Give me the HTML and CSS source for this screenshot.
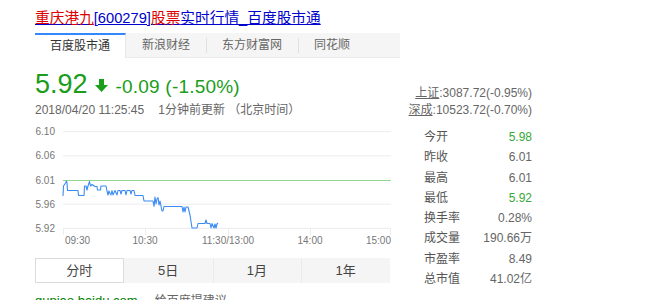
FILE: index.html
```html
<!DOCTYPE html>
<html lang="zh-CN">
<head>
<meta charset="utf-8">
<title>重庆港九股票</title>
<link rel="stylesheet" href="styles.css">
</head>
<body>
<div class="card">
  <div class="title"><a href="#"><em>重庆港九</em>[600279]<em>股票</em>实时行情_百度股市通</a></div>
  <div class="body">
    <div class="left">
      <div class="srcbar">
        <span class="src active">百度股市通</span>
        <span class="src">新浪财经</span>
        <span class="src">东方财富网</span>
        <span class="src">同花顺</span>
      </div>
      <div class="price-row">
        <span class="price">5.92</span>
        <svg class="arrow" width="13" height="13" viewBox="0 0 13 13"><path d="M4 0h5v6h4l-6.5 7L0 6h4z" fill="#1a9d1a"/></svg>
        <span class="change">-0.09 (-1.50%)</span>
      </div>
      <div class="time">2018/04/20 11:25:45<span class="gap"></span>1分钟前更新 （北京时间）</div>
      <svg class="chart" width="365" height="138" viewBox="0 0 365 138">
        <g class="grid">
          <line x1="28" y1="11.7" x2="356" y2="11.7"/>
          <line x1="28" y1="35.9" x2="356" y2="35.9"/>
          <line x1="28" y1="84.2" x2="356" y2="84.2"/>
          <line x1="28" y1="108.3" x2="356" y2="108.3"/>
          <line x1="28.5" y1="108" x2="28.5" y2="115"/>
          <line x1="110.5" y1="108" x2="110.5" y2="115"/>
          <line x1="193.5" y1="108" x2="193.5" y2="115"/>
          <line x1="275.5" y1="108" x2="275.5" y2="115"/>
          <line x1="355.5" y1="108" x2="355.5" y2="115"/>
        </g>
        <line class="base" x1="28" y1="60.5" x2="356" y2="60.5"/>
        <g class="ylab">
          <text x="20" y="15.2">6.10</text>
          <text x="20" y="39.4">6.06</text>
          <text x="20" y="64">6.01</text>
          <text x="20" y="87.7">5.96</text>
          <text x="20" y="111.8">5.92</text>
        </g>
        <g class="xlab">
          <text x="30" y="124">09:30</text>
          <text x="110" y="124" text-anchor="middle">10:30</text>
          <text x="193" y="124" text-anchor="middle">11:30/13:00</text>
          <text x="275" y="124" text-anchor="middle">14:00</text>
          <text x="356" y="124" text-anchor="end">15:00</text>
        </g>
        <polyline class="curve" points="28,76 28.5,66 30.5,63 31.5,61 32,63 32.5,70.5 43,70.5 43.5,75.5 49,75.5 49.5,66 51,66 52,70 53,66 54.5,61.5 55.5,66 57,64.5 60,66.5 62,66.5 62.5,70 65.5,70 66,66 71,66 72,71 73,75 74,71 75,73.5 76,75 77,70.5 78,75 80,70.5 82,75 83,70.5 85,70.5 86,74 87,70.5 90,70.5 91,75 92,70.5 95,70.5 96,74 97,70.5 99,70.5 100,75.5 108,75.5 109,81 118,81 119,86.5 120,77 121,84 122,79 123,77.5 124,85 125,81 127,91 128,91 129,86.5 147,86.5 148,92 149,87 150,92 151,87 153,87 155,95 157,108 162,108 163,103.5 170,103.5 171,100 172,103.5 175,103.5 176,108 177,103.5 179,108 180,104 181,108 182,104 183,103"/>
      </svg>
      <div class="periods">
        <span class="period active">分时</span>
        <span class="period">5日</span>
        <span class="period">1月</span>
        <span class="period">1年</span>
      </div>
      <div class="foot"><span class="url">gupiao.baidu.com</span><span class="advice">给百度提建议</span></div>
    </div>
    <div class="right">
      <div class="index"><a href="#">上证</a>:3087.72(-0.95%)</div>
      <div class="index"><a href="#">深成</a>:10523.72(-0.70%)</div>
      <div class="stats">
        <div class="stat"><span class="k">今开</span><span class="v green">5.98</span></div>
        <div class="stat"><span class="k">昨收</span><span class="v">6.01</span></div>
        <div class="stat"><span class="k">最高</span><span class="v">6.01</span></div>
        <div class="stat"><span class="k">最低</span><span class="v green">5.92</span></div>
        <div class="stat"><span class="k">换手率</span><span class="v">0.28%</span></div>
        <div class="stat"><span class="k">成交量</span><span class="v">190.66万</span></div>
        <div class="stat"><span class="k">市盈率</span><span class="v">8.49</span></div>
        <div class="stat"><span class="k">总市值</span><span class="v">41.02亿</span></div>
      </div>
    </div>
  </div>
</div>
</body>
</html>
```

FILE: styles.css
```css
html, body {
  margin: 0;
  padding: 0;
  background: #fff;
}
body {
  font-family: "Liberation Sans", Arial, "Noto Sans CJK SC", sans-serif;
  color: #333;
  overflow: hidden;
}
.card {
  padding-left: 35px;
}
.title {
  padding-top: 8px;
  height: 20px;
  line-height: 20px;
  font-size: 14.7px;
  white-space: nowrap;
}
.title a {
  color: #0000cc;
  text-decoration: underline;
}
.title em {
  font-style: normal;
  color: #dd0000;
}
.body {
  display: flex;
  margin-top: 5px;
}
.left {
  width: 365px;
  flex: none;
}
.srcbar {
  display: flex;
  height: 25px;
  background: #f5f5f5;
  border-bottom: 1px solid #ebebeb;
  box-sizing: border-box;
}
.src {
  position: relative;
  padding: 0 16px;
  font-size: 12px;
  line-height: 25px;
  color: #666;
  white-space: nowrap;
}
.src + .src::before {
  content: "";
  position: absolute;
  left: 0;
  top: 5px;
  bottom: 4px;
  border-left: 1px solid #e0e0e0;
}
.src.active + .src::before {
  display: none;
}
.src.active {
  background: #fff;
  color: #333;
  padding: 0 15px 0 15px;
  border-top: 2px solid #3388ff;
  border-right: 1px solid #e6e6e6;
  line-height: 23px;
  height: 25px;
  box-sizing: border-box;
}
.price-row {
  display: flex;
  align-items: baseline;
  margin-top: 11px;
  height: 30px;
  line-height: 30px;
  color: #1a9d1a;
}
.price {
  font-size: 27px;
}
.arrow {
  margin: 0 8px 0 7px;
  align-self: center;
  position: relative;
  top: 1px;
}
.change {
  font-size: 19px;
  letter-spacing: 0.2px;
}
.time {
  margin-top: 3px;
  height: 16px;
  line-height: 16px;
  font-size: 12px;
  color: #666;
  white-space: nowrap;
}
.gap {
  display: inline-block;
  width: 14px;
}
.chart {
  display: block;
  margin-top: 2px;
}
.grid line {
  stroke: #ececec;
  stroke-width: 1;
}
.base {
  stroke: #8fd68f;
  stroke-width: 1.2;
}
.ylab text, .xlab text {
  font-family: "Liberation Sans", Arial, sans-serif;
  font-size: 10px;
  fill: #777;
}
.ylab text {
  text-anchor: end;
}
.curve {
  fill: none;
  stroke: #3b8bf5;
  stroke-width: 1.1;
  stroke-linejoin: round;
}
.periods {
  display: grid;
  grid-template-columns: repeat(4, 1fr);
  width: 355px;
  height: 25px;
  background: #f5f5f5;
}
.period {
  position: relative;
  text-align: center;
  font-size: 13px;
  line-height: 25px;
  color: #444;
}
.period + .period::before {
  content: "";
  position: absolute;
  left: 0;
  top: 0;
  bottom: 0;
  border-left: 1px solid #ebebeb;
}
.period.active {
  background: #fff;
  border: 1px solid #dcdcdc;
  line-height: 23px;
  box-sizing: border-box;
}
.period.active + .period::before {
  display: none;
}
.foot {
  margin-top: 10px;
  font-size: 12px;
  line-height: 16px;
  white-space: nowrap;
}
.url {
  color: #008000;
  font-size: 13px;
}
.advice {
  color: #666;
  margin-left: 17px;
}
.right {
  width: 132px;
  flex: none;
  padding-top: 52px;
  font-size: 12px;
  color: #666;
}
.index {
  text-align: right;
  line-height: 16.5px;
  white-space: nowrap;
}
.index a {
  color: #666;
  text-decoration: underline;
}
.stats {
  margin-top: 9px;
  padding-left: 24px;
}
.stat {
  display: flex;
  justify-content: space-between;
  height: 20.3px;
  line-height: 20.3px;
}
.k {
  color: #555;
}
.v {
  color: #666;
}
.v.green {
  color: #36a836;
}
```
